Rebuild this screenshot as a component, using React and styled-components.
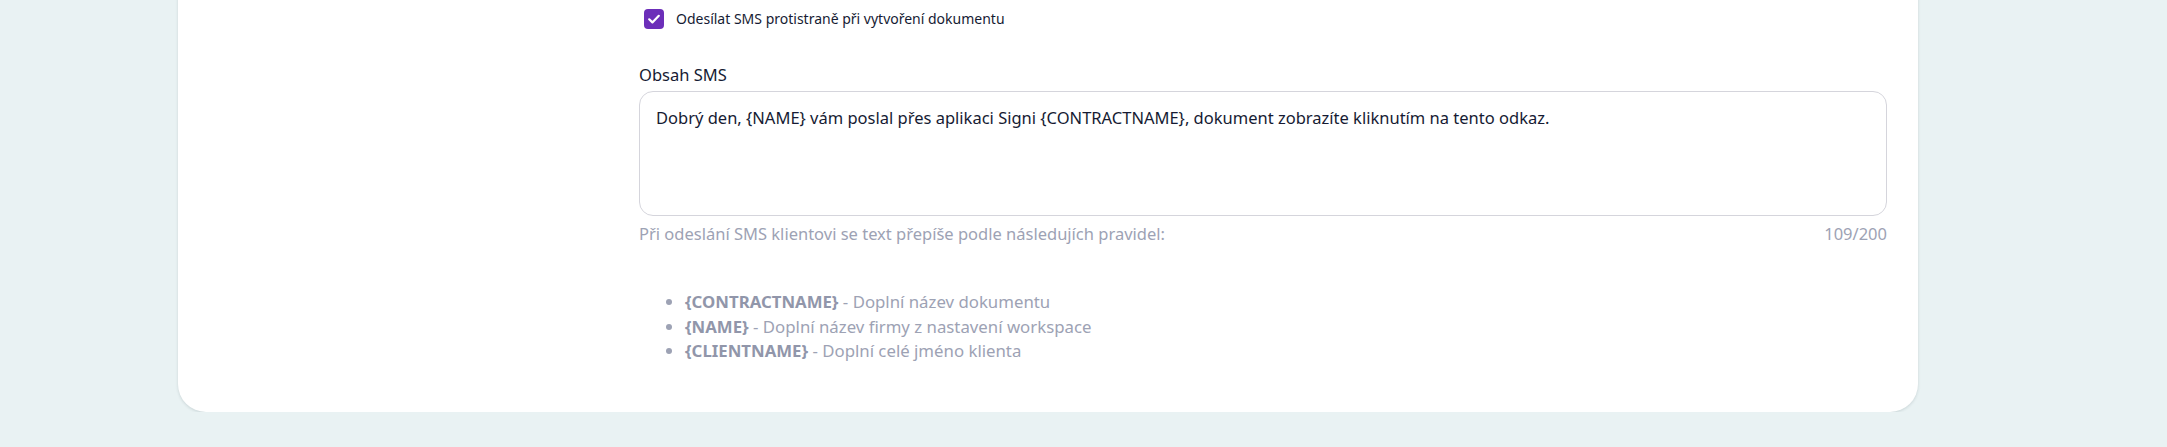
import React from "react";
import styled, { createGlobalStyle } from "styled-components";

const GlobalStyle = createGlobalStyle`
  body {
    margin: 0;
    background: #e9f2f3;
    font-family: "Noto Sans", "Open Sans", sans-serif;
    color: #161b33;
    overflow: hidden;
  }
`;

const Page = styled.div`
  min-height: 447px;
  background: #e9f2f3;
`;

const Card = styled.div`
  margin: -40px 249px 0 178px;
  background: #ffffff;
  border-radius: 28px;
  box-shadow: 0 1px 3px rgba(40, 60, 70, 0.16);
  display: grid;
  grid-template-columns: 429px 1fr;
  padding: 49px 31px 48px 32px;
`;

const Side = styled.div``;

const Main = styled.div`
  display: flex;
  flex-direction: column;
`;

const CheckRow = styled.label`
  display: flex;
  align-items: center;
  gap: 12px;
  padding-left: 5px;
  font-size: 14px;
  line-height: 20px;
  color: #161b33;
  cursor: pointer;
`;

const Box = styled.span`
  width: 20px;
  height: 20px;
  border-radius: 4px;
  background: #6c2eb9;
  display: flex;
  align-items: center;
  justify-content: center;
  flex-shrink: 0;
`;

const Label = styled.div`
  margin-top: 34px;
  font-size: 16.5px;
  line-height: 24px;
  color: #161b33;
`;

const Area = styled.textarea`
  margin-top: 4px;
  box-sizing: border-box;
  width: 100%;
  height: 125px;
  padding: 14px 16px;
  border: 1px solid #d5d5dc;
  border-radius: 14px;
  resize: none;
  outline: none;
  font-family: "Noto Sans", "Open Sans", sans-serif;
  font-size: 16.5px;
  line-height: 24px;
  color: #161b33;
  background: #fff;
`;

const HelpRow = styled.div`
  margin-top: 6px;
  display: flex;
  justify-content: space-between;
  font-size: 16.5px;
  line-height: 24px;
  color: #9da2b4;
`;

const Rules = styled.ul`
  margin: 44px 0 0;
  padding-left: 46px;
  font-size: 16.8px;
  line-height: 24.5px;
  color: #9da2b4;

  li::marker {
    color: #9da2b4;
  }
`;

const Key = styled.strong`
  font-weight: 700;
  color: #9196aa;
`;

const rules = [
  { key: "{CONTRACTNAME}", text: "Doplní název dokumentu" },
  { key: "{NAME}", text: "Doplní název firmy z nastavení workspace" },
  { key: "{CLIENTNAME}", text: "Doplní celé jméno klienta" },
];

const message =
  "Dobrý den, {NAME} vám poslal přes aplikaci Signi {CONTRACTNAME}, dokument zobrazíte kliknutím na tento odkaz.";

export default function App() {
  return (
    <Page>
      <GlobalStyle />
      <Card>
        <Side />
        <Main>
          <CheckRow>
            <Box>
              <svg width="14" height="14" viewBox="0 0 14 14" fill="none">
                <path d="M2.2 7.3l3.2 3.1 6.4-6.6" stroke="#fff" strokeWidth="2.2" strokeLinecap="round" strokeLinejoin="round" />
              </svg>
            </Box>
            Odesílat SMS protistraně při vytvoření dokumentu
          </CheckRow>
          <Label>Obsah SMS</Label>
          <Area defaultValue={message} readOnly />
          <HelpRow>
            <span>Při odeslání SMS klientovi se text přepíše podle následujích pravidel:</span>
            <span>{message.length}/200</span>
          </HelpRow>
          <Rules>
            {rules.map((r) => (
              <li key={r.key}>
                <Key>{r.key}</Key> - {r.text}
              </li>
            ))}
          </Rules>
        </Main>
      </Card>
    </Page>
  );
}
